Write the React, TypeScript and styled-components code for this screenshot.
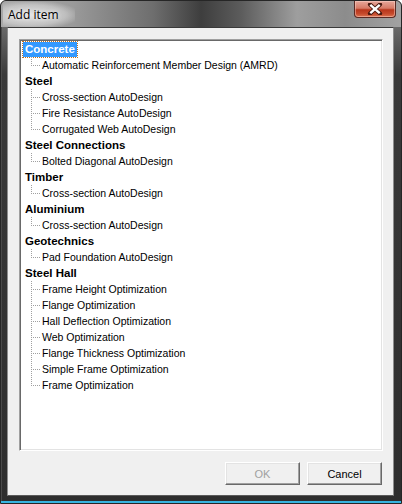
import React from 'react';
import styled, { createGlobalStyle } from 'styled-components';

const GlobalStyle = createGlobalStyle`
	html, body {
		margin: 0;
		padding: 0;
		background: #ffffff;
	}
	#root {
		width: 402px;
		height: 504px;
	}
`;

interface Group {
	name: string;
	items: string[];
}

const groups: Group[] = [
	{ name: 'Concrete', items: ['Automatic Reinforcement Member Design (AMRD)'] },
	{ name: 'Steel', items: ['Cross-section AutoDesign', 'Fire Resistance AutoDesign', 'Corrugated Web AutoDesign'] },
	{ name: 'Steel Connections', items: ['Bolted Diagonal AutoDesign'] },
	{ name: 'Timber', items: ['Cross-section AutoDesign'] },
	{ name: 'Aluminium', items: ['Cross-section AutoDesign'] },
	{ name: 'Geotechnics', items: ['Pad Foundation AutoDesign'] },
	{
		name: 'Steel Hall',
		items: [
			'Frame Height Optimization',
			'Flange Optimization',
			'Hall Deflection Optimization',
			'Web Optimization',
			'Flange Thickness Optimization',
			'Simple Frame Optimization',
			'Frame Optimization',
		],
	},
];

const Window = styled.div`
	box-sizing: border-box;
	width: 402px;
	height: 504px;
	display: flex;
	flex-direction: column;
	border: 1px solid #262626;
	border-radius: 6px 6px 0 0;
	background: #2e2e2e;
	overflow: hidden;
`;

const TitleBar = styled.div`
	height: 26px;
	display: flex;
	justify-content: space-between;
	align-items: flex-start;
	padding-left: 2px;
	padding-right: 5px;
	flex-shrink: 0;
	background: linear-gradient(
		90deg,
		#a8a8a8 0%,
		#9a9a9a 18%,
		#6e6e6e 38%,
		#3e3e3e 50%,
		#5c5c5c 60%,
		#9e9e9e 74%,
		#8c8c8c 86%,
		#a2a2a2 100%
	);
`;

const Title = styled.span`
	margin-top: 1px;
	padding: 4px 16px 5px 5px;
	font-family: 'Open Sans', 'Noto Sans', sans-serif;
	font-size: 12px;
	color: #000;
	background: radial-gradient(ellipse at 40% 50%, rgba(235, 235, 235, 0.85) 0%, rgba(220, 220, 220, 0.55) 55%, rgba(200, 200, 200, 0) 80%);
	text-shadow: 0 0 4px #fff;
`;

const CloseButton = styled.div`
	width: 42px;
	height: 17px;
	box-sizing: border-box;
	border: 1px solid #5a2a24;
	border-top: none;
	border-radius: 0 0 4px 4px;
	background: linear-gradient(180deg, #e7a79a 0%, #d67a66 45%, #b8361c 55%, #c64a2c 80%, #dc7452 100%);
	box-shadow: inset 0 0 0 1px rgba(255, 220, 210, 0.45);
	display: flex;
	align-items: center;
	justify-content: center;
`;

const Frame = styled.div`
	flex: 1;
	display: flex;
	padding: 0 7px 7px 6px;
	background: linear-gradient(180deg, #6a6a6a 0%, #3a3a3a 10%, #2e2e2e 100%);
	box-shadow: inset 0 -2px 0 #36b4e0, inset 1px 0 0 #4a4a4a;
`;

const Client = styled.div`
	flex: 1;
	display: flex;
	flex-direction: column;
	gap: 11px;
	padding: 11px 10px 10px 11px;
	background: #f0f0f0;
	border: 1px solid #8e8e8e;
	border-top-color: #3a3a3a;
	border-bottom-color: #5a5a5a;
`;

const Tree = styled.div`
	flex: 1;
	box-sizing: border-box;
	background: #fff;
	border-style: solid;
	border-width: 1px;
	border-color: #a0a0a0 #ffffff #ffffff #a0a0a0;
	box-shadow: inset 1px 1px 0 #696969, inset -1px -1px 0 #e3e3e3;
	padding: 1px 2px;
	font-family: 'Liberation Sans', Arial, sans-serif;
	font-size: 10.5px;
	color: #000;
`;

const Row = styled.div`
	height: 16px;
	display: flex;
	align-items: center;
`;

const RootLabel = styled.span<{ $selected?: boolean }>`
	font-weight: bold;
	font-size: 11.5px;
	padding: 1px 2px;
	margin-left: 1px;
	line-height: 13px;
	background: ${(p) => (p.$selected ? '#3399ff' : 'transparent')};
	color: ${(p) => (p.$selected ? '#fff' : '#000')};
	outline: ${(p) => (p.$selected ? '1px dotted #c07020' : 'none')};
	outline-offset: 0;
`;

const Connector = styled.span`
	width: 10px;
	height: 16px;
	margin-left: 8px;
	margin-right: 2px;
	flex-shrink: 0;
`;

const ChildLabel = styled.span`
	line-height: 13px;
	white-space: nowrap;
`;

const Buttons = styled.div`
	display: flex;
	justify-content: flex-end;
	gap: 7px;
	padding-right: 1px;
`;

const Button = styled.button<{ $disabled?: boolean }>`
	width: 75px;
	height: 23px;
	padding: 0;
	font-family: 'Liberation Sans', Arial, sans-serif;
	font-size: 11px;
	background: #f0f0f0;
	color: ${(p) => (p.$disabled ? '#a0a0a0' : '#000')};
	border-style: solid;
	border-width: 1px;
	border-color: #ffffff #696969 #696969 #ffffff;
	box-shadow: inset -1px -1px 0 #a0a0a0, inset 1px 1px 0 #e3e3e3;
	border-radius: 0;
`;

const TreeLines = ({ last }: { last?: boolean }) => (
	<Connector>
		<svg width="10" height="16" style={{ display: 'block' }}>
			{Array.from({ length: last ? 5 : 8 }).map((_, i) => (
				<rect key={'v' + i} x={1} y={i * 2} width={1} height={1} fill="#a0a0a0" />
			))}
			{Array.from({ length: 4 }).map((_, i) => (
				<rect key={'h' + i} x={3 + i * 2} y={8} width={1} height={1} fill="#a0a0a0" />
			))}
		</svg>
	</Connector>
);

const CloseGlyph = () => (
	<svg width="16" height="12" viewBox="0 0 16 12">
		<path
			d="M3 1.5 L13 10.5 M13 1.5 L3 10.5"
			stroke="#4a1a10"
			strokeWidth="4.2"
			strokeLinecap="round"
			fill="none"
		/>
		<path d="M3.3 1.8 L12.7 10.2 M12.7 1.8 L3.3 10.2" stroke="#ffffff" strokeWidth="2.4" fill="none" />
	</svg>
);

const App = () => {
	return (
		<>
			<GlobalStyle />
			<Window>
				<TitleBar>
					<Title>Add item</Title>
					<CloseButton>
						<CloseGlyph />
					</CloseButton>
				</TitleBar>
				<Frame>
					<Client>
						<Tree>
							{groups.map((g, gi) => (
								<React.Fragment key={g.name}>
									<Row>
										<RootLabel $selected={gi === 0}>{g.name}</RootLabel>
									</Row>
									{g.items.map((item, ii) => (
										<Row key={item + ii}>
											<TreeLines last={ii === g.items.length - 1} />
											<ChildLabel>{item}</ChildLabel>
										</Row>
									))}
								</React.Fragment>
							))}
						</Tree>
						<Buttons>
							<Button $disabled>OK</Button>
							<Button>Cancel</Button>
						</Buttons>
					</Client>
				</Frame>
			</Window>
		</>
	);
};

export default App;
